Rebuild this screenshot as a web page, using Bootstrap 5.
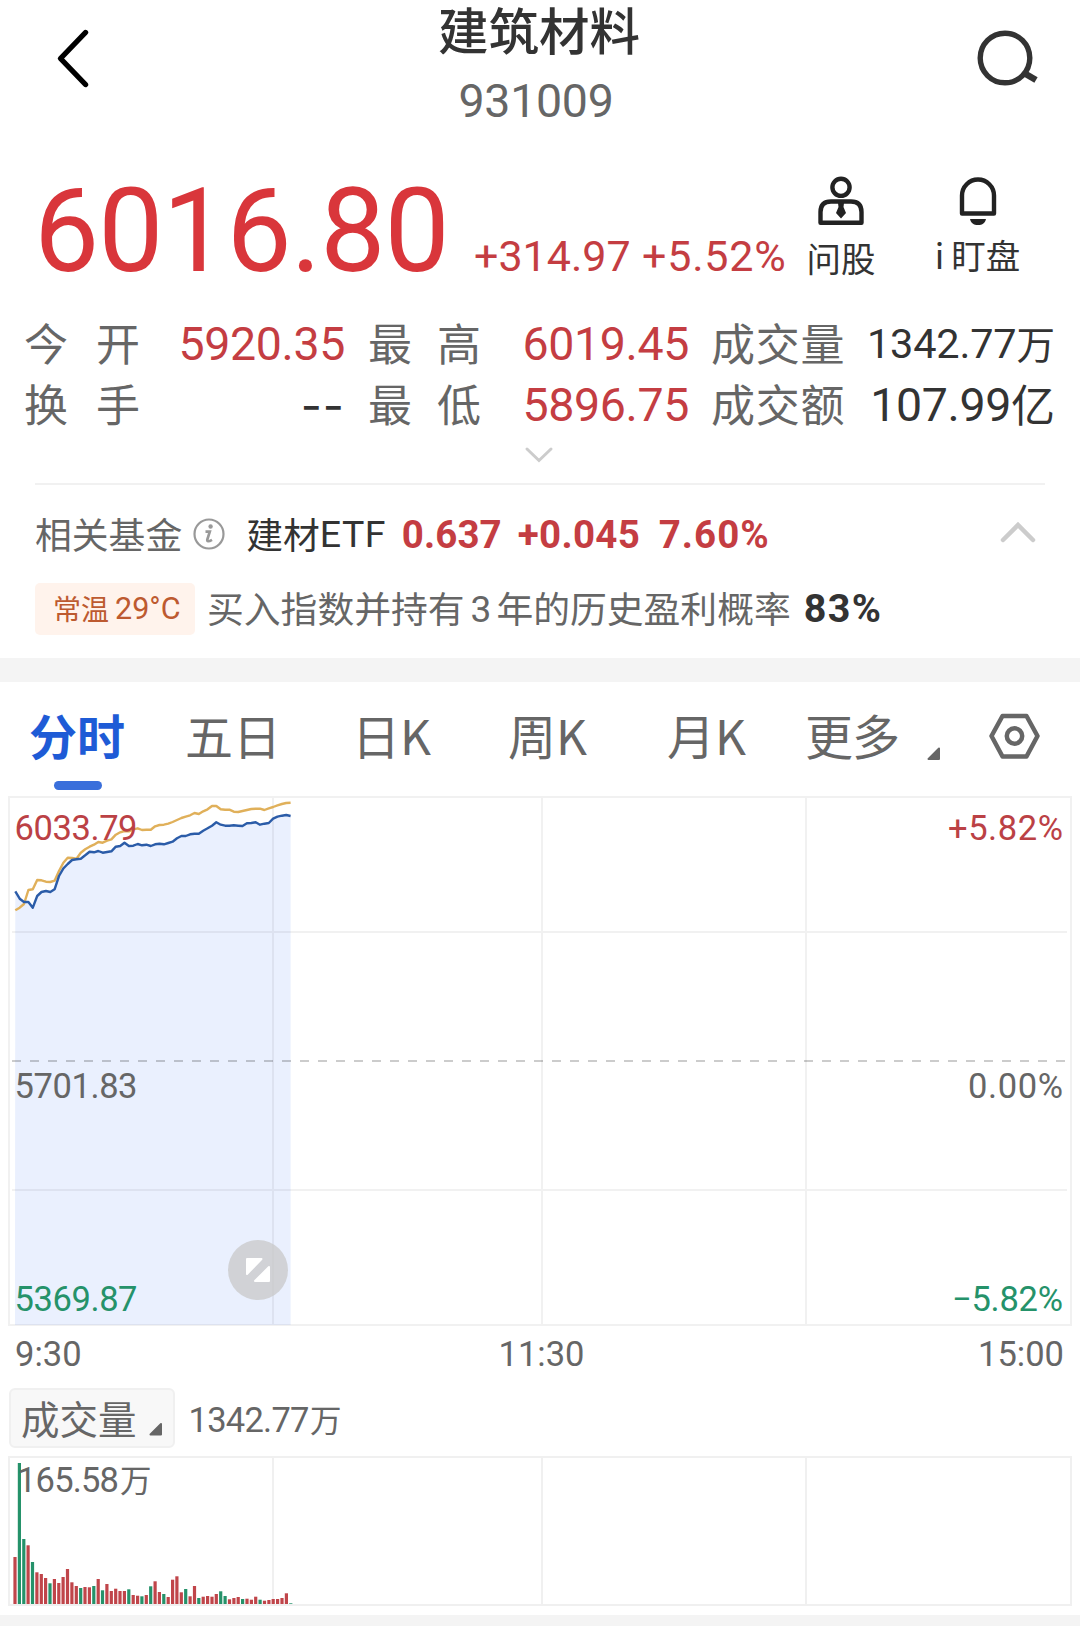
<!DOCTYPE html>
<html lang="zh-CN">
<head>
<meta charset="utf-8">
<meta name="viewport" content="width=device-width, initial-scale=1">
<title>建筑材料 931009</title>
<link href="https://cdn.jsdelivr.net/npm/bootstrap@5.3.0/dist/css/bootstrap.min.css" rel="stylesheet">
<style>
:root{--up:#d9363b;--up2:#c43d42;--ink:#333;--mute:#666}
body{width:1080px;height:1626px;overflow:hidden;background:#fff;color:var(--ink);font-family:Roboto,"Noto Sans CJK SC",sans-serif;line-height:1}
svg{display:block;flex:none;overflow:visible}
.cjk{font-family:"Noto Sans CJK SC",sans-serif}
.mute{color:var(--mute)}
.up{color:var(--up2)}
.topbar{height:150px;padding:0 34px 0 50px}
.title-name{font-size:50.5px;font-weight:500;line-height:56px;padding-left:2px}
.title-code{font-size:46.5px;line-height:54px;margin-top:18px;letter-spacing:-.3px}
.quote{height:164px;padding-left:34px}
.price{font-size:116px;line-height:116px;color:var(--up);width:440px;margin-top:23px;letter-spacing:-1px}
.delta{font-size:43px;line-height:50px;margin-top:81px}
.tool{width:90px}
.tool-label{font-size:34.5px;line-height:48px;margin-top:5px}
.stats{display:grid;grid-template-columns:116px 205px 137px 207px 157px 209px;grid-auto-rows:61px;padding-left:24px;height:124px}
.stats>div{line-height:61px;white-space:nowrap}
.k{font-size:44px;margin-top:-2px}
.k.second{padding-left:23px;padding-right:1px}
.k.third{padding-left:22px;letter-spacing:.8px}
.v{font-size:46.5px;letter-spacing:-.35px}
.dashes{font-family:Inter,sans-serif;font-size:46px;letter-spacing:1px}
.rule{height:2px;background:#f1f1f1;margin:0 35px}
.fund{height:100px;padding-left:35px;padding-right:42px}
.fund-label{font-size:36.8px;line-height:44px;margin-top:-5px}
.num-b{font-size:38.5px;font-weight:700;letter-spacing:.1px}
.advice{height:52px;padding-left:35px;margin-top:-2px}
.temp{width:160px;height:52px;border-radius:5px;background:#fff3ec;color:#bd5a30;padding-left:18px}
.band{background:#f4f4f4;height:24px}
.tabs-row{height:114px;padding:26px 0 0 29px}
.tab-i{font-size:48px;line-height:52px}
.tab-on{color:#1e5bd6;font-weight:700;position:relative}
.tab-on::after{content:"";position:absolute;left:25px;top:73px;width:48px;height:9px;border-radius:5px;background:#3a6fdb}
.times{height:62px;padding:0 16px 0 15px;font-size:34.5px;line-height:56px}
.times span{flex:1}
.sel{width:166px;height:60px;border:2px solid #f0f0f0;border-radius:6px;background:#f8f8f8;padding-left:10px}
text{font-family:Roboto,"Noto Sans CJK SC",sans-serif;font-size:34.5px}
</style>
<script src="https://cdn.jsdelivr.net/npm/bootstrap@5.3.0/dist/js/bootstrap.bundle.min.js"></script>
</head>
<body>
<header class="topbar d-flex justify-content-between">
  <svg width="46" height="100" viewBox="50 0 46 100"><path d="M85.500 32.500L60.500 58.500L85.500 84.500" fill="none" stroke="#000" stroke-width="5.400" stroke-linecap="round" stroke-linejoin="round"/></svg>
  <div class="text-center">
    <div class="title-name cjk">建筑材料</div>
    <div class="title-code mute" style="margin-right:4px">931009</div>
  </div>
  <svg width="66" height="100" viewBox="980 0 66 100"><g fill="none" stroke="#333" stroke-width="5.400"><circle cx="1005" cy="58" r="24.800"/><path d="M1024 73L1036 80" stroke-width="6.500"/></g></svg>
</header>

<section class="quote d-flex">
  <div class="price">6016.80</div>
  <div class="delta up d-flex"><span style="width:168px">+314.97</span><span style="letter-spacing:.8px">+5.52%</span></div>
  <div class="d-flex ms-auto" style="margin-right:11px">
    <div class="tool d-flex flex-column align-items-center">
      <svg width="50" height="78" viewBox="817 150 50 78"><g fill="none" stroke="#222" stroke-width="4.400"><circle cx="842" cy="187.300" r="8.600"/><path d="M821.500 222.800V212Q821.500 201.500 832 201.500H852Q862.500 201.500 862.500 212V222.800Z" stroke-linejoin="round"/></g><path d="M839 203H845L844.500 207L847 213L842 218.500L837 213L839.500 207Z" fill="#222"/></svg>
      <div class="tool-label cjk text-nowrap">问股</div>
    </div>
    <div class="d-flex flex-column align-items-center" style="width:183px">
      <svg width="50" height="78" viewBox="954 150 50 78"><path d="M963 213.500V195.500A16 16 0 0 1 995 195.500V213.500Z" fill="none" stroke="#222" stroke-width="4.400" stroke-linejoin="round"/><path d="M971 219H987C986 223 983.500 225 979 225S972 223 971 219Z" fill="#222"/></svg>
      <div class="tool-label cjk d-flex" style="gap:7px;margin-top:2px"><span>i</span><span>盯盘</span></div>
    </div>
  </div>
</section>

<section class="stats">
  <div class="k cjk mute d-flex justify-content-between"><span>今</span><span>开</span></div><div class="v up text-end">5920.35</div>
  <div class="k second cjk mute d-flex justify-content-between"><span>最</span><span>高</span></div><div class="v up text-end">6019.45</div>
  <div class="k third cjk mute">成交量</div><div class="d-flex justify-content-end"><span style="font-size:41.500px;letter-spacing:-.2px;margin-top:-1px">1342.77</span><span class="cjk" style="font-size:38.500px;margin-top:-2px">万</span></div>
  <div class="k cjk mute d-flex justify-content-between"><span>换</span><span>手</span></div><div class="dashes text-end">--</div>
  <div class="k second cjk mute d-flex justify-content-between"><span>最</span><span>低</span></div><div class="v up text-end">5896.75</div>
  <div class="k third cjk mute">成交额</div><div class="d-flex justify-content-end"><span class="v">107.99</span><span class="cjk" style="font-size:44px;margin-top:-2px">亿</span></div>
</section>
<div class="d-flex justify-content-center" style="height:45px"><svg width="34" height="30" viewBox="1 0 34 30"><path d="M5 11L17 22.500L29 11" fill="none" stroke="#ccc" stroke-width="3" stroke-linecap="round"/></svg></div>
<div class="rule"></div>

<section class="fund d-flex align-items-center">
  <span class="fund-label cjk mute">相关基金</span>
  <svg width="34" height="34" viewBox="0 1 34 34" style="margin-left:10px;margin-right:20px"><circle cx="17" cy="17" r="14.500" fill="none" stroke="#999" stroke-width="2.200"/><circle cx="18.600" cy="9.500" r="2.200" fill="#999"/><path d="M13.500 14.700H17.800L15.300 22.500Q14.800 25.800 20 22.800" fill="none" stroke="#999" stroke-width="2.700"/></svg>
  <span class="fund-label cjk">建材</span><span style="font-size:37.500px;width:82px;letter-spacing:.5px">ETF</span>
  <span class="num-b up" style="width:116px">0.637</span>
  <span class="num-b up" style="width:141px;letter-spacing:.3px">+0.045</span>
  <span class="num-b up" style="letter-spacing:1px">7.60%</span>
  <svg class="ms-auto" width="38" height="30" viewBox="1 1 38 30"><path d="M4 21L19 6L34 21" fill="none" stroke="#ccc" stroke-width="4.500" stroke-linecap="round"/></svg>
</section>
<section class="advice d-flex align-items-center">
  <div class="temp d-flex align-items-center"><span class="cjk" style="font-size:28px;line-height:36px;margin-top:-3px">常温</span><span style="font-size:30.500px;margin-left:6px">29°C</span></div>
  <div class="d-flex align-items-center mute" style="margin-left:12px"><span class="fund-label cjk" style="margin-top:-4px">买入指数并持有</span><span style="font-size:37px;margin:0 5px 0 6px">3</span><span class="fund-label cjk" style="margin-top:-4px">年的历史盈利概率</span></div>
  <span class="num-b" style="margin-left:13px;font-size:39.500px;letter-spacing:1.300px">83%</span>
</section>
<div style="height:23px"></div>
<div class="band"></div>

<nav class="tabs-row d-flex cjk mute">
  <div class="tab-i tab-on" style="width:156px">分时</div>
  <div class="tab-i" style="width:167px">五日</div>
  <div class="tab-i" style="width:156px">日K</div>
  <div class="tab-i" style="width:159px">周K</div>
  <div class="tab-i" style="width:138px">月K</div>
  <div class="tab-i" style="width:120px;letter-spacing:-1px">更多</div>
  <svg width="17" height="52" viewBox="925 708 17 52"><path d="M939 748.500V759H928.500Z" fill="#666" stroke="#666" stroke-width="2" stroke-linejoin="round"/></svg>
  <svg style="margin-left:44px" width="58" height="52" viewBox="986 708 58 52"><path d="M1002.500 716H1026.500L1037.500 736L1026.500 756.500H1002.500L991.500 736Z" fill="none" stroke="#666" stroke-width="4.500" stroke-linejoin="round"/><circle cx="1014.500" cy="736" r="7.700" fill="none" stroke="#666" stroke-width="4.500"/></svg>
</nav>

<svg width="1080" height="530" viewBox="0 796 1080 530">
  <path id="area" fill="#eaf0fe"/>
  <g fill="none" stroke="#000" stroke-opacity=".055" stroke-width="2"><path d="M9 797H1071V1325H9ZM273 798V1324M542 798V1324M806 798V1324M12 932H1067M12 1190H1067"/></g>
  <path d="M12 1061H1067" stroke="#000" stroke-opacity=".2" stroke-width="2" stroke-dasharray="9 9"/>
  <path id="avg" fill="none" stroke="#e0b05a" stroke-width="2.400" stroke-linejoin="round"/>
  <path id="now" fill="none" stroke="#2b5ca8" stroke-width="2.400" stroke-linejoin="round"/>
  <g fill="#bb4145"><text x="14.500" y="840" textLength="123">6033.79</text><text x="1063" y="840" text-anchor="end" textLength="115">+5.82%</text></g>
  <g fill="#666"><text x="14.500" y="1098" textLength="123">5701.83</text><text x="1063" y="1098" text-anchor="end" textLength="95">0.00%</text></g>
  <g fill="#25926a"><text x="14.500" y="1311" textLength="123">5369.87</text><text x="1063" y="1311" text-anchor="end" textLength="111">−5.82%</text></g>
  <circle cx="258" cy="1270" r="30" fill="#c8c8c8" fill-opacity=".75"/>
  <path d="M247 1259H261.500L247 1274ZM269 1267V1281H255Z" fill="#fff" stroke="#fff" stroke-width="2" stroke-linejoin="round"/>
</svg>
<div class="times d-flex justify-content-between mute"><span>9:30</span><span class="text-center ps-1">11:30</span><span class="text-end">15:00</span></div>

<div class="d-flex align-items-center mute" style="height:60px;padding-left:9px">
  <div class="sel d-flex align-items-center"><span class="cjk" style="font-size:38.500px;line-height:48px;margin-top:-3px">成交量</span>
    <svg style="margin-left:11px;margin-top:21px" width="16" height="16" viewBox="0 0 16 16"><path d="M13 3V13.500H2.500Z" fill="#666" stroke="#666" stroke-width="2" stroke-linejoin="round"/></svg></div>
  <svg width="170" height="60" viewBox="175 1388 170 60" fill="#666"><text x="188.500" y="1432" textLength="121">1342.77</text><text x="310" y="1432" style="font-size:31.500px">万</text></svg>
</div>

<svg width="1080" height="159" viewBox="0 1448 1080 159">
  <path d="M9 1457H1071V1605H9ZM273 1458V1604M542 1458V1604M806 1458V1604" fill="none" stroke="#f0f0f0" stroke-width="2"/>
  <g id="bars"></g>
  <g fill="#666"><text x="17" y="1492" textLength="102">165.58</text><text x="120" y="1492" style="font-size:31.500px">万</text></g>
</svg>
<div class="band" style="margin-top:8px"></div>

<script>
const now=[304,326,336,336,353,318,306,303,306,298,258,235,222,210,208,206,196,185,187,183,188,186,184,170,168,158,168,167,162,166,164,168,163,161,163,159,155,145,138,138,133,131,131,122,115,107,97,104,107,107,106,107,108,100,99,97,104,101,99,86,80,77,75,78];
const avg=[361,353,342,300,298,270,271,275,276,272,243,218,203,204,206,188,178,170,164,156,158,152,148,134,127,123,124,118,115,120,119,119,109,105,104,101,96,90,84,80,76,69,72,64,58,48,48,58,59,59,65,66,63,60,57,56,56,60,55,51,46,42,39,38];
const pts=a=>a.map((v,i)=>(15.3+i*4.37).toFixed(1)+','+(790+v/3).toFixed(1)).join('L');
document.getElementById('now').setAttribute('d','M'+pts(now));
document.getElementById('avg').setAttribute('d','M'+pts(avg));
document.getElementById('area').setAttribute('d','M15,1325L'+pts(now)+'L290.6,1325Z');
const vol='141r 423g 195g 176r 126g 95r 90r 78r 62g 75r 63r 81r 105r 65r 54r 48g 51r 50r 54g 75r 41g 60r 39r 46r 39r 39r 44g 27r 25r 23g 27r 53g 68r 36r 30g 21r 73r 83r 35r 45g 23r 54r 18g 22r 24r 22r 30r 38g 24g 14r 18r 21r 15g 16r 13r 22r 13g 10r 12r 15r 15r 18r 32r 2g'.split(' ');
document.getElementById('bars').innerHTML=vol.map((s,i)=>{const h=parseInt(s)/3;
return `<rect x="${(13.4+i*4.377).toFixed(1)}" y="${(1604-h).toFixed(1)}" width="3.2" height="${h.toFixed(1)}" fill="${s.endsWith('g')?'#25926a':'#c0454a'}"/>`}).join('');
</script>
</body>
</html>
